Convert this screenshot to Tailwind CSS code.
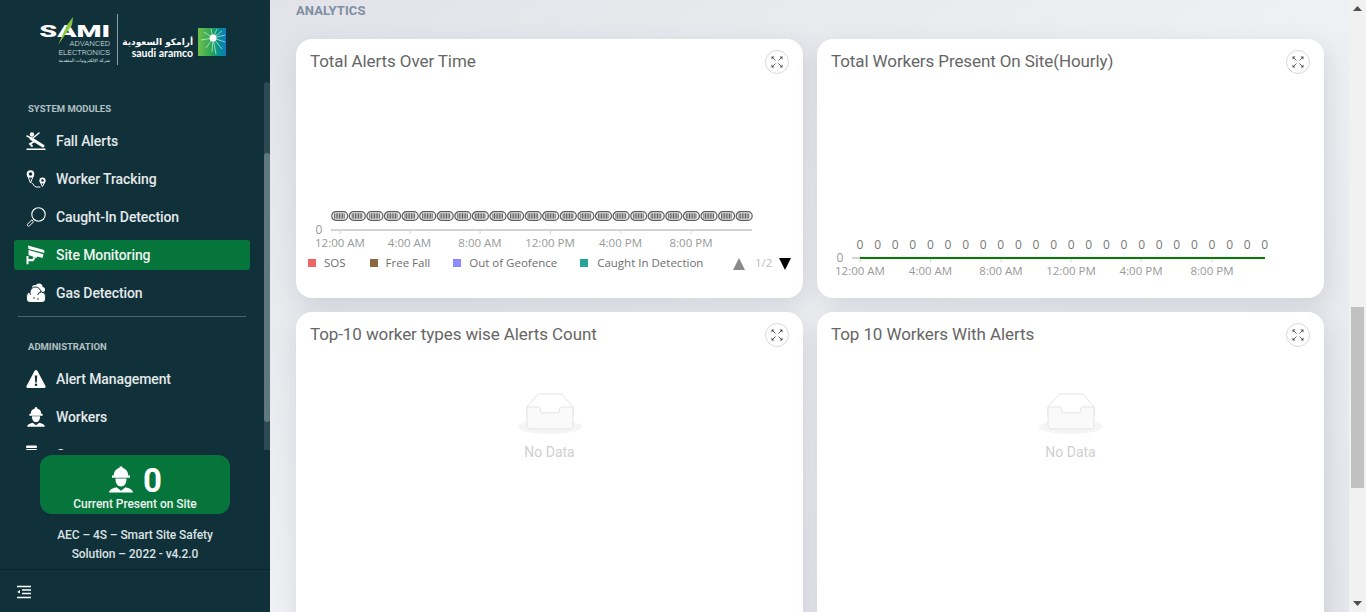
<!DOCTYPE html>
<html lang="en">
<head>
<meta charset="utf-8">
<script src="https://cdn.jsdelivr.net/npm/@tailwindcss/browser@4"></script>
<title>Analytics</title>
</head>
<body class="h-[612px] w-[1366px] overflow-hidden bg-[#eceef2] font-['Roboto',sans-serif]">
<svg width="0" height="0" class="absolute">
  <defs>
    <g id="worker" fill="#fff">
      <path d="M11.500 .5h3V2c3.500.7 5.500 3.500 5.800 7.500H22v2.200H4V9.500h1.700C6 5.500 8 2.700 11.500 2z"/>
      <path d="M7.500 12.500h11c.2 4.500-2 8-5.500 8s-5.700-3.500-5.500-8z"/>
      <path d="M1 26.500c.3-2.800 3-4.300 7.500-5.300l4.500 3.500 4.500-3.500c4.500 1 7.200 2.500 7.500 5.300z"/>
    </g>
    <g id="pill">
      <rect x="0.700" y="0.700" width="16" height="8.600" rx="4.300" fill="#f2f2f2" stroke="#5c5c5c" stroke-width="1.200"/>
      <path d="M3.600 2.500v5M5.200 2.200v5.600M6.800 2.200v5.600M8.400 2.200v5.600M10 2.200v5.600M11.600 2.200v5.600M13.200 2.500v5" stroke="#5c5c5c" stroke-width="1"/>
    </g>
    <g id="expand">
      <path d="M4.500 4.500L2 2M7.500 4.500L10 2M4.500 7.500L2 10M7.500 7.500L10 10" stroke="#666" stroke-width="1" fill="none"/>
      <path d="M.5.500h3l-3 3zM11.500.500h-3l3 3zM.5 11.500v-3l3 3zM11.500 11.500h-3l3-3z" fill="#555"/>
    </g>
    <g id="empty">
      <ellipse fill="#f5f5f5" cx="32" cy="34" rx="32" ry="7"/>
      <g fill="none" stroke="#e3e3e3">
        <path d="M55 13.760L44.854 2.258C44.367 1.474 43.656 1 42.907 1H21.093c-.749 0-1.460.474-1.947 1.257L9 13.761V23h46z" fill="#fff"/>
        <path d="M41.613 16.931c0-1.605.994-2.930 2.227-2.931H55v18.137C55 34.260 53.680 36 52.050 36h-40.100C10.320 36 9 34.259 9 32.137V14h11.160c1.233 0 2.227 1.323 2.227 2.928v.022c0 1.605 1.005 2.901 2.237 2.901h14.752c1.232 0 2.237-1.308 2.237-2.913z" fill="#fafafa"/>
      </g>
    </g>
  </defs>
</svg>

<div class="flex h-[612px] w-[1366px]">
  <!-- Sidebar -->
  <aside class="relative flex h-[612px] w-[270px] shrink-0 flex-col bg-[#11313a]">
    <div class="flex h-[82px] shrink-0 items-start pl-[41px] pt-[14px]">
      <div class="relative flex h-[52px] w-[69px] flex-col items-end">
        <div class="mt-[8px] flex h-[18px] origin-right scale-x-[1.68] items-center text-[17px] font-black leading-none text-white">SAMI</div>
        <svg class="absolute left-[14px] top-[3px]" width="20" height="29" viewBox="0 0 20 29"><path d="M18 0l-1 8-14 20L12 8z" fill="#8cc63f"/></svg>
        <div class="-mt-[1px] text-[8px] font-light leading-[9px] text-[#dfe5e6]">ADVANCED</div>
        <div class="text-[8px] font-light leading-[9px] text-[#dfe5e6]">ELECTRONICS</div>
        <div class="mt-[1px] whitespace-nowrap font-['DejaVu_Sans',sans-serif] text-[4.5px] leading-[6px] text-[#dfe5e6]">شركة الإلكترونيات المتقدمة</div>
      </div>
      <div class="ml-[7px] h-[51px] w-px bg-[#8a9ca1]"></div>
      <div class="ml-[7px] mt-[23px] flex w-[68px] flex-col items-end">
        <div class="whitespace-nowrap font-['DejaVu_Sans',sans-serif] text-[9px] font-bold leading-[11px] text-white">أرامكو السعودية</div>
        <div class="whitespace-nowrap font-['Lato',sans-serif] text-[10.5px] font-bold leading-[10px] text-white">saudi aramco</div>
      </div>
      <div class="relative ml-[5px] mt-[14px] h-[28px] w-[28px] bg-linear-to-r from-[#6cc04a] via-[#1fa457] to-[#1378bd]">
        <svg class="absolute left-0 top-0" width="28" height="28" viewBox="0 0 28 28">
          <path d="M15 10L13 1M15 10L19 1M15 10L24 3M15 10L27 7M15 10L27 14M15 10L24 21M15 10L18 26M15 10L14 24M15 10L8 20M15 10L3 12M15 10L6 4" stroke="#fff" stroke-width=".8" opacity=".7"/>
          <circle cx="15" cy="10" r="3.500" fill="#fff"/>
        </svg>
      </div>
    </div>

    <div class="relative h-[368px] shrink-0 overflow-hidden">
      <nav class="flex flex-col pr-[20px]">
        <div class="mt-[22px] pl-[28px] text-[9.5px] font-bold leading-[10px] text-[#b4c0c3]">SYSTEM MODULES</div>
        <ul class="mt-[8px] flex flex-col pl-[14px]">
          <li class="flex h-[38px] items-center pl-[12px] text-[14px] font-medium tracking-[-0.1px] text-[#e4e9ea]">
            <svg class="w-[20px]" width="20" height="20" viewBox="0 0 20 20" fill="none" stroke="#fff" stroke-linecap="round"><circle cx="6" cy="3.500" r="2.200" fill="#fff" stroke="none"/><path d="M5 7.500l12 7.500" stroke-width="3"/><path d="M7 7l6-5M5 7L1 5" stroke-width="1.500"/><path d="M9 10l-5 3 2 2" stroke-width="1.800"/><path d="M1 18.300h18" stroke-width="1.400"/></svg>
            <span class="ml-[10px]">Fall Alerts</span>
          </li>
          <li class="flex h-[38px] items-center pl-[12px] text-[14px] font-medium tracking-[-0.1px] text-[#e4e9ea]">
            <svg class="w-[20px]" width="20" height="20" viewBox="0 0 20 20" fill="none" stroke="#fff"><circle cx="4.500" cy="5" r="2.800" stroke-width="2"/><path d="M4.500 14L1.800 7M4.500 14l2.700-7" stroke-width="1"/><path d="M5.500 14c2 0 2 4 5 4h4" stroke-width="1"/><circle cx="16.500" cy="11.500" r="2.200" stroke-width="1.800"/><path d="M16.500 17.500l-2.500-5M16.500 17.500l2.500-5" stroke-width="1"/></svg>
            <span class="ml-[10px]">Worker Tracking</span>
          </li>
          <li class="flex h-[38px] items-center pl-[12px] text-[14px] font-medium tracking-[-0.1px] text-[#e4e9ea]">
            <svg class="w-[20px]" width="20" height="20" viewBox="0 0 20 20" fill="none" stroke="#fff"><circle cx="12.500" cy="7.500" r="6.700" stroke-width="1.100"/><path d="M7.500 12.500l-1.500 1.500" stroke-width="1"/><path d="M5.700 13l1.800 1.800-4 4c-.5.5-1.300.5-1.800 0s-.5-1.300 0-1.800z" stroke-width="1"/></svg>
            <span class="ml-[10px]">Caught-In Detection</span>
          </li>
          <li class="my-[4px] flex h-[30px] items-center rounded-[3px] bg-[#06753c] pl-[12px] text-[14px] font-medium tracking-[-0.1px] text-[#eef3f0]">
            <svg class="w-[20px]" width="20" height="20" viewBox="0 0 20 20" fill="#fff"><path d="M2 .5l16 4.500.5 3L2.500 4z"/><path d="M2.500 5l15 4.200-1 3.800-5-1.400-1 1.400-8-3z"/><path d="M0.500 11h2v3h4l1-2 2 .8-2 3.400H2.500v3h-2z"/></svg>
            <span class="ml-[10px]">Site Monitoring</span>
          </li>
          <li class="flex h-[38px] items-center pl-[12px] text-[14px] font-medium tracking-[-0.1px] text-[#e4e9ea]">
            <svg class="w-[20px]" width="20" height="20" viewBox="0 0 20 20" fill="#fff"><circle cx="9" cy="5" r="3"/><circle cx="13" cy="4" r="3.500"/><circle cx="16.500" cy="6.500" r="2.500"/><g stroke="#11313a" stroke-width="1"><circle cx="4.500" cy="13" r="4"/><circle cx="9.500" cy="9.500" r="5.500"/><circle cx="15.500" cy="13" r="4"/></g><rect x="1" y="12" width="18" height="7" rx="3"/><circle cx="8" cy="15" r=".8" fill="#11313a"/><circle cx="12" cy="16" r=".8" fill="#11313a"/></svg>
            <span class="ml-[10px]">Gas Detection</span>
          </li>
        </ul>
        <div class="ml-[18px] mr-[4px] mt-[4px] h-px bg-[#4f666c]"></div>
        <div class="mt-[25px] pl-[28px] text-[9.5px] font-bold leading-[10px] text-[#b4c0c3]">ADMINISTRATION</div>
        <ul class="mt-[8px] flex flex-col pl-[14px]">
          <li class="flex h-[38px] items-center pl-[12px] text-[14px] font-medium tracking-[-0.1px] text-[#e4e9ea]">
            <svg class="w-[20px]" width="20" height="20" viewBox="0 0 20 20"><path d="M10 1c.7 0 1.200.4 1.500 1l8 15c.5 1-.1 2-1.300 2H1.800c-1.200 0-1.800-1-1.300-2l8-15c.3-.6.8-1 1.500-1z" fill="#fff"/><path d="M8.800 6.500h2.400l-.4 7h-1.600z" fill="#11313a"/><circle cx="10" cy="15.800" r="1.300" fill="#11313a"/></svg>
            <span class="ml-[10px]">Alert Management</span>
          </li>
          <li class="flex h-[38px] items-center pl-[12px] text-[14px] font-medium tracking-[-0.1px] text-[#e4e9ea]">
            <svg class="w-[20px]" width="20" height="20" viewBox="0 0 26 27"><use href="#worker"/></svg>
            <span class="ml-[10px]">Workers</span>
          </li>
          <li class="flex h-[38px] items-center pl-[12px] text-[14px] font-medium tracking-[-0.1px] text-[#e4e9ea]">
            <svg class="w-[20px]" width="20" height="20" viewBox="0 0 20 20" fill="#fff"><rect x="0" y="0.500" width="11" height="2.500" rx="1"/><rect x="0" y="4" width="11" height="15" rx="1"/></svg>
            <span class="ml-[10px] mt-[1px]">Contractors</span>
          </li>
        </ul>
      </nav>
      <div class="absolute right-0 top-0 h-[368px] w-[6px] rounded-t-[3px] bg-[#2c4a52]"></div>
      <div class="absolute right-0 top-[71px] h-[269px] w-[6px] rounded-[3px] bg-[#5f777d]"></div>
    </div>

    <div class="mx-[40px] mt-[5px] flex h-[59px] shrink-0 flex-col items-center rounded-[12px] bg-[#06753c] pt-[10px]">
      <div class="flex h-[28px] items-center gap-[9px]">
        <svg width="26" height="27" viewBox="0 0 26 27"><use href="#worker"/></svg>
        <span class="mt-[2px] text-[33px] font-bold leading-none text-white">0</span>
      </div>
      <div class="mt-[4px] text-[12px] font-medium leading-[14px] tracking-[-0.05px] text-[#eef3f0]">Current Present on Site</div>
    </div>
    <div class="mt-[12px] px-[30px] text-center text-[12px] font-medium leading-[19px] tracking-[-0.07px] text-[#dbe2e3]">AEC – 4S – Smart Site Safety<br>Solution – 2022 - v4.2.0</div>

    <div class="mt-[5px] flex h-[44px] shrink-0 items-center border-t border-[#0b242b] pl-[16px]">
      <svg width="16" height="14" viewBox="0 0 16 14" fill="none" stroke="#fff" stroke-width="1.300"><path d="M1 1.500h14M6 5h9M6 8.500h9M1 12.500h14"/><path d="M4 5v3.500L1.200 7z" fill="#fff" stroke="none"/></svg>
    </div>
  </aside>

  <!-- Main -->
  <main class="flex h-[612px] min-w-0 flex-1 flex-col overflow-hidden bg-linear-to-br from-[#e2e3e8] via-[#eff0f3] to-[#e6e7ec] pl-[26px] pr-[25px]">
    <h2 class="mt-[4px] h-[14px] text-[13px] font-bold leading-[14px] tracking-[0.1px] text-[#7f8ea3]">ANALYTICS</h2>
    <div class="mt-[21px] grid grid-cols-[507px_507px] gap-[14px]">

      <!-- Card 1 -->
      <section class="flex h-[259px] flex-col rounded-[16px] bg-white shadow-[3px_8px_24px_rgba(90,95,115,0.18)]">
        <header class="flex h-[48px] justify-between pl-[14px] pr-[14px] pt-[11px]">
          <h3 class="text-[17px] leading-[22px] tracking-[-0.1px] text-[#666]">Total Alerts Over Time</h3>
          <button class="flex h-[24px] w-[24px] items-center justify-center rounded-full border border-[#d9d9d9] bg-white"><svg width="12" height="12" viewBox="0 0 12 12"><use href="#expand"/></svg></button>
        </header>
        <svg class="block" width="507" height="170" viewBox="296 87 507 170" font-family="Open Sans" font-size="11.500" fill="#999" text-anchor="middle">
          <use href="#pill" x="331" y="211"/><use href="#pill" x="348.600" y="211"/><use href="#pill" x="366.200" y="211"/><use href="#pill" x="383.800" y="211"/><use href="#pill" x="401.400" y="211"/><use href="#pill" x="419" y="211"/><use href="#pill" x="436.500" y="211"/><use href="#pill" x="454.100" y="211"/><use href="#pill" x="471.700" y="211"/><use href="#pill" x="489.300" y="211"/><use href="#pill" x="506.900" y="211"/><use href="#pill" x="524.500" y="211"/><use href="#pill" x="542" y="211"/><use href="#pill" x="559.600" y="211"/><use href="#pill" x="577.200" y="211"/><use href="#pill" x="594.800" y="211"/><use href="#pill" x="612.400" y="211"/><use href="#pill" x="630" y="211"/><use href="#pill" x="647.500" y="211"/><use href="#pill" x="665.100" y="211"/><use href="#pill" x="682.700" y="211"/><use href="#pill" x="700.300" y="211"/><use href="#pill" x="717.900" y="211"/><use href="#pill" x="735.500" y="211"/>
          <path d="M331 230h421" stroke="#d3d3d3" stroke-width="2"/>
          <path d="M340 230v4M410 230v4M480 230v4M550.500 230v4M621 230v4M691 230v4" stroke="#d3d3d3"/>
          <text x="319" y="233.500" font-size="12">0</text>
          <text x="340" y="247">12:00 AM</text><text x="409.500" y="247">4:00 AM</text><text x="480" y="247">8:00 AM</text><text x="550" y="247">12:00 PM</text><text x="620.500" y="247">4:00 PM</text><text x="691" y="247">8:00 PM</text>
        </svg>
        <div class="-mt-[6px] flex h-[24px] items-center pl-[12px] pr-[12px] font-['Open_Sans',sans-serif] text-[11.5px] text-[#6e6e6e]">
          <span class="h-[8px] w-[8px] bg-[#ef6565]"></span><span class="ml-[8px]">SOS</span>
          <span class="ml-[24px] h-[8px] w-[8px] bg-[#8a6a3c]"></span><span class="ml-[8px]">Free Fall</span>
          <span class="ml-[23px] h-[8px] w-[8px] bg-[#8f8bff]"></span><span class="ml-[8px]">Out of Geofence</span>
          <span class="ml-[23px] h-[8px] w-[8px] bg-[#26a69a]"></span><span class="ml-[9px]">Caught In Detection</span>
          <svg class="ml-auto mt-[2px]" width="12" height="12" viewBox="0 0 12 12"><path d="M6 0l6 12H0z" fill="#8a8a8a"/></svg>
          <span class="ml-[10px] w-[16px] text-[#bdbdbd]">1/2</span>
          <svg class="ml-[8px] mt-[2px]" width="12" height="12" viewBox="0 0 12 12"><path d="M0 0h12L6 12z" fill="#000"/></svg>
        </div>
      </section>

      <!-- Card 2 -->
      <section class="flex h-[259px] flex-col rounded-[16px] bg-white shadow-[3px_8px_24px_rgba(90,95,115,0.18)]">
        <header class="flex h-[48px] justify-between pl-[14px] pr-[14px] pt-[11px]">
          <h3 class="text-[17px] leading-[22px] tracking-[-0.1px] text-[#666]">Total Workers Present On Site(Hourly)</h3>
          <button class="flex h-[24px] w-[24px] items-center justify-center rounded-full border border-[#d9d9d9] bg-white"><svg width="12" height="12" viewBox="0 0 12 12"><use href="#expand"/></svg></button>
        </header>
        <svg class="block" width="507" height="200" viewBox="817 87 507 200" font-family="Open Sans" font-size="11.500" fill="#999" text-anchor="middle">
          <path d="M852 258h8" stroke="#d3d3d3" stroke-width="2"/>
          <path d="M860 258v4M930.500 258v4M1001 258v4M1071 258v4M1141 258v4M1212 258v4" stroke="#d3d3d3"/>
          <path d="M860 258h405" stroke="#008000" stroke-width="2"/>
          <text x="840" y="261.500" font-size="12">0</text>
          <g fill="#777" font-size="12"><text x="860" y="249">0</text><text x="877.600" y="249">0</text><text x="895.200" y="249">0</text><text x="912.800" y="249">0</text><text x="930.400" y="249">0</text><text x="948" y="249">0</text><text x="965.600" y="249">0</text><text x="983.200" y="249">0</text><text x="1000.800" y="249">0</text><text x="1018.400" y="249">0</text><text x="1036" y="249">0</text><text x="1053.600" y="249">0</text><text x="1071.200" y="249">0</text><text x="1088.800" y="249">0</text><text x="1106.400" y="249">0</text><text x="1124" y="249">0</text><text x="1141.600" y="249">0</text><text x="1159.200" y="249">0</text><text x="1176.800" y="249">0</text><text x="1194.400" y="249">0</text><text x="1212" y="249">0</text><text x="1229.600" y="249">0</text><text x="1247.200" y="249">0</text><text x="1264.800" y="249">0</text></g>
          <text x="860" y="275">12:00 AM</text><text x="930.500" y="275">4:00 AM</text><text x="1001" y="275">8:00 AM</text><text x="1071" y="275">12:00 PM</text><text x="1141" y="275">4:00 PM</text><text x="1212" y="275">8:00 PM</text>
        </svg>
      </section>

      <!-- Card 3 -->
      <section class="flex h-[400px] flex-col rounded-[16px] bg-white shadow-[3px_8px_24px_rgba(90,95,115,0.18)]">
        <header class="flex h-[48px] justify-between pl-[14px] pr-[14px] pt-[11px]">
          <h3 class="text-[17px] leading-[22px] tracking-[-0.1px] text-[#666]">Top-10 worker types wise Alerts Count</h3>
          <button class="flex h-[24px] w-[24px] items-center justify-center rounded-full border border-[#d9d9d9] bg-white"><svg width="12" height="12" viewBox="0 0 12 12"><use href="#expand"/></svg></button>
        </header>
        <div class="mt-[33px] flex flex-col items-center">
          <svg width="64" height="41" viewBox="0 0 64 41"><use href="#empty"/></svg>
          <span class="mt-[10px] text-[14px] leading-[16px] text-[#cfcfcf]">No Data</span>
        </div>
      </section>

      <!-- Card 4 -->
      <section class="flex h-[400px] flex-col rounded-[16px] bg-white shadow-[3px_8px_24px_rgba(90,95,115,0.18)]">
        <header class="flex h-[48px] justify-between pl-[14px] pr-[14px] pt-[11px]">
          <h3 class="text-[17px] leading-[22px] tracking-[-0.1px] text-[#666]">Top 10 Workers With Alerts</h3>
          <button class="flex h-[24px] w-[24px] items-center justify-center rounded-full border border-[#d9d9d9] bg-white"><svg width="12" height="12" viewBox="0 0 12 12"><use href="#expand"/></svg></button>
        </header>
        <div class="mt-[33px] flex flex-col items-center">
          <svg width="64" height="41" viewBox="0 0 64 41"><use href="#empty"/></svg>
          <span class="mt-[10px] text-[14px] leading-[16px] text-[#cfcfcf]">No Data</span>
        </div>
      </section>
    </div>
  </main>

  <!-- Page scrollbar -->
  <div class="relative flex h-[612px] w-[17px] shrink-0 flex-col items-center bg-[#f1f1f1]">
    <svg class="mt-[6px]" width="9" height="5" viewBox="0 0 9 5"><path d="M4.500 0L9 5H0z" fill="#505050"/></svg>
    <div class="absolute left-[2px] top-[307px] h-[181px] w-[13px] bg-[#c1c1c1]"></div>
    <svg class="mb-[6px] mt-auto" width="9" height="5" viewBox="0 0 9 5"><path d="M0 0h9L4.500 5z" fill="#505050"/></svg>
  </div>
</div>
</body>
</html>
